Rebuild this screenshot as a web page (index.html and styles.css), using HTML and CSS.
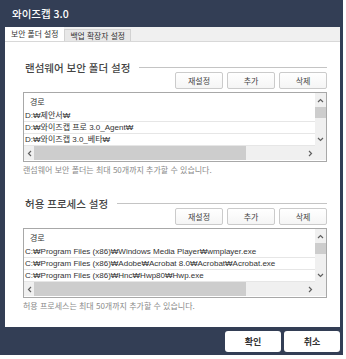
FILE: index.html
```html
<!DOCTYPE html>
<html lang="ko">
<head>
    <meta charset="UTF-8">
    <title>와이즈캡 3.0</title>
    <link rel="stylesheet" href="styles.css">
</head>
<body>
    <div class="window">
        <div class="window__title">와이즈캡 3.0</div>
        <div class="tabs">
            <span class="tabs__item tabs__item--on">보안 폴더 설정</span>
            <span class="tabs__item">백업 확장자 설정</span>
        </div>
        <div class="panel">
            <div class="sec">
                <div class="sec__head">
                    <h2 class="sec__title">랜섬웨어 보안 폴더 설정</h2>
                    <span class="sec__line"></span>
                </div>
                <div class="sec__tools">
                    <a href="###" class="btn">재설정</a>
                    <a href="###" class="btn">추가</a>
                    <a href="###" class="btn">삭제</a>
                </div>
                <div class="list">
                    <div class="list__body">
                        <div class="list__head">경로</div>
                        <div class="list__row">D:₩제안서₩</div>
                        <div class="list__row">D:₩와이즈캡 프로 3.0_Agent₩</div>
                        <div class="list__row">D:₩와이즈캡 3.0_베타₩</div>
                    </div>
                    <div class="vbar">
                        <span class="vbar__arrow"><svg width="7" height="5" viewBox="0 0 7 5"><polyline points="1,4 3.5,1.5 6,4"/></svg></span>
                        <span class="vbar__thumb"></span>
                        <span class="vbar__track"></span>
                        <span class="vbar__arrow"><svg width="7" height="5" viewBox="0 0 7 5"><polyline points="1,1 3.5,3.5 6,1"/></svg></span>
                    </div>
                    <div class="hbar">
                        <span class="hbar__arrow"><svg width="5" height="7" viewBox="0 0 5 7"><polyline points="4,1 1.5,3.5 4,6"/></svg></span>
                        <span class="hbar__thumb"></span>
                        <span class="hbar__track"></span>
                        <span class="hbar__arrow"><svg width="5" height="7" viewBox="0 0 5 7"><polyline points="1,1 3.5,3.5 1,6"/></svg></span>
                    </div>
                    <div class="corner"></div>
                </div>
                <p class="sec__note">랜섬웨어 보안 폴더는 최대 50개까지 추가할 수 있습니다.</p>
            </div>
            <div class="sec sec--next">
                <div class="sec__head">
                    <h2 class="sec__title">허용 프로세스 설정</h2>
                    <span class="sec__line"></span>
                </div>
                <div class="sec__tools">
                    <a href="###" class="btn">재설정</a>
                    <a href="###" class="btn">추가</a>
                    <a href="###" class="btn">삭제</a>
                </div>
                <div class="list">
                    <div class="list__body">
                        <div class="list__head">경로</div>
                        <div class="list__row">C:₩Program Files (x86)₩Windows Media Player₩wmplayer.exe</div>
                        <div class="list__row">C:₩Program Files (x86)₩Adobe₩Acrobat 8.0₩Acrobat₩Acrobat.exe</div>
                        <div class="list__row">C:₩Program Files (x86)₩Hnc₩Hwp80₩Hwp.exe</div>
                    </div>
                    <div class="vbar">
                        <span class="vbar__arrow"><svg width="7" height="5" viewBox="0 0 7 5"><polyline points="1,4 3.5,1.5 6,4"/></svg></span>
                        <span class="vbar__thumb"></span>
                        <span class="vbar__track"></span>
                        <span class="vbar__arrow"><svg width="7" height="5" viewBox="0 0 7 5"><polyline points="1,1 3.5,3.5 6,1"/></svg></span>
                    </div>
                    <div class="hbar">
                        <span class="hbar__arrow"><svg width="5" height="7" viewBox="0 0 5 7"><polyline points="4,1 1.5,3.5 4,6"/></svg></span>
                        <span class="hbar__thumb"></span>
                        <span class="hbar__track"></span>
                        <span class="hbar__arrow"><svg width="5" height="7" viewBox="0 0 5 7"><polyline points="1,1 3.5,3.5 1,6"/></svg></span>
                    </div>
                    <div class="corner"></div>
                </div>
                <p class="sec__note">허용 프로세스는 최대 50개까지 추가할 수 있습니다.</p>
            </div>
        </div>
        <div class="footer">
            <a href="###" class="footer__btn">확인</a>
            <a href="###" class="footer__btn">취소</a>
        </div>
    </div>
</body>
</html>
```

FILE: styles.css
```css
body {
    margin:0;
    background:#fff;
    font-family:"Liberation Sans", "Noto Sans CJK KR", sans-serif;
}
a {
    text-decoration:none;
}
.window {
    width:343px;
    height:355px;
    background:#333e55;
    display:flex;
    flex-direction:column;
}
.window__title {
    height:27px;
    line-height:27px;
    padding-left:12px;
    color:#fff;
    font-family:"Noto Sans CJK KR", sans-serif;
    font-size:10.5px;
    font-weight:500;
}
.tabs {
    height:14px;
    margin:0 3px 0 5px;
    background:#f0f0f0;
    display:flex;
    align-items:flex-end;
}
.tabs__item {
    font-family:"Noto Sans CJK KR", sans-serif;
    font-size:7.8px;
    color:#333;
    height:11px;
    line-height:11px;
    padding:0 5px;
    background:#e8e8e8;
    border:1px solid #d2d2d2;
    border-bottom:0;
}
.tabs__item--on {
    height:14px;
    line-height:13px;
    padding:0 6px;
    background:#fff;
    border:0;
}
.panel {
    flex:1;
    margin:0 3px 0 5px;
    background:#fff;
    border-top:1px solid #d8d8d8;
    padding:20px 13px 0 18px;
}
.sec--next {
    margin-top:23px;
}
.sec__head {
    height:10px;
    display:flex;
    align-items:center;
    gap:9px;
    padding-left:2px;
}
.sec__title {
    margin:0;
    font-family:"Noto Sans CJK KR", sans-serif;
    font-size:10.5px;
    font-weight:500;
    color:#444;
    white-space:nowrap;
}
.sec__line {
    flex:1;
    height:1px;
    background:#c4c4c4;
}
.sec__tools {
    display:flex;
    justify-content:flex-end;
    gap:4px;
}
.btn {
    width:48px;
    height:17px;
    box-sizing:border-box;
    line-height:15px;
    text-align:center;
    border:1px solid #cbcbcb;
    border-radius:2px;
    background:linear-gradient(to bottom, #ffffff, #f5f5f5);
    font-family:"Noto Sans CJK KR", sans-serif;
    font-size:8px;
    color:#444;
}
.list {
    margin-top:3px;
    height:70px;
    box-sizing:border-box;
    border:1px solid #a8a8a8;
    display:grid;
    grid-template-columns:1fr 11px;
    grid-template-rows:53px 14px;
}
.list__body {
    overflow:hidden;
    font-size:8px;
    color:#333;
}
.list__head {
    height:17px;
    line-height:17px;
    padding-left:6px;
    font-family:"Noto Sans CJK KR", sans-serif;
}
.list__row {
    height:11px;
    line-height:11px;
    padding-left:1px;
    border-bottom:1px solid #e6e6e6;
    white-space:nowrap;
}
.vbar {
    background:#f0f0f0;
    display:flex;
    flex-direction:column;
}
.vbar__arrow, .hbar__arrow {
    display:flex;
    align-items:center;
    justify-content:center;
}
.vbar__arrow {
    height:14px;
}
.vbar__thumb {
    height:11px;
    background:#cdcdcd;
}
.vbar__track, .hbar__track {
    flex:1;
}
.hbar {
    background:#f0f0f0;
    display:flex;
}
.hbar__arrow {
    width:10px;
}
.hbar__thumb {
    width:212px;
    background:#cdcdcd;
}
.corner {
    background:#f0f0f0;
}
svg polyline {
    fill:none;
    stroke:#606060;
    stroke-width:1.2;
}
.sec__note {
    margin:3px 0 0;
    height:10px;
    line-height:10px;
    font-family:"Noto Sans CJK KR", sans-serif;
    font-size:8px;
    color:#8a8a8a;
}
.footer {
    height:28px;
    box-sizing:border-box;
    padding:4px 3px 3px;
    display:flex;
    justify-content:flex-end;
    gap:3px;
}
.footer__btn {
    width:56px;
    height:21px;
    line-height:21px;
    text-align:center;
    background:#fff;
    border-radius:3px;
    font-family:"Noto Sans CJK KR", sans-serif;
    font-size:9px;
    font-weight:700;
    color:#333;
}
```
